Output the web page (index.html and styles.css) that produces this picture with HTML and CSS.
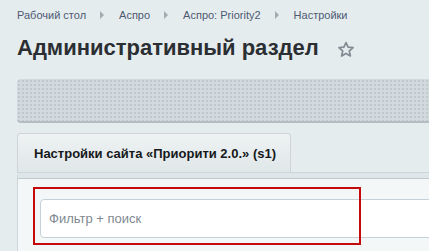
FILE: index.html
```html
<!DOCTYPE html>
<html lang="ru">
<head>
    <meta charset="UTF-8">
    <title>Административный раздел</title>
    <link rel="stylesheet" href="styles.css">
</head>
<body>
    <div class="page">
        <div class="breadcrumbs">
            <a href="#">Рабочий стол</a>
            <span class="sep"></span>
            <a href="#">Аспро</a>
            <span class="sep"></span>
            <a href="#">Аспро: Priority2</a>
            <span class="sep"></span>
            <a href="#">Настройки</a>
        </div>

        <div class="title-row">
            <h1>Административный раздел</h1>
            <svg class="star" width="18" height="17" viewBox="0 0 18 17">
                <path d="M9 1.6 L11.1 6.2 L16.1 6.7 L12.3 10 L13.4 15 L9 12.4 L4.6 15 L5.7 10 L1.9 6.7 L6.9 6.2 Z" fill="none" stroke="#838c93" stroke-width="1.7" stroke-linejoin="round"/>
            </svg>
        </div>

        <div class="toolbar"></div>

        <div class="tabs">
            <div class="tab">Настройки сайта «Приорити 2.0.» (s1)</div>
        </div>

        <div class="content">
            <div class="filter">
                <input class="filter-input" type="text" placeholder="Фильтр + поиск">
                <div class="highlight"></div>
            </div>
        </div>
    </div>
</body>
</html>
```

FILE: styles.css
```css
* {
    margin: 0;
    padding: 0;
    box-sizing: border-box;
    font-family: "Liberation Sans", Arial, sans-serif;
}

body {
    background-color: #e5ecee;
    overflow: hidden;
}

.page {
    padding: 8px 0 0 17px;
}

.breadcrumbs {
    display: flex;
    align-items: center;
    font-size: 11px;
    line-height: 14px;
    height: 14px;
}

.breadcrumbs a {
    color: #4d5a72;
    text-decoration: none;
}

.sep {
    width: 0;
    height: 0;
    border-top: 4px solid transparent;
    border-bottom: 4px solid transparent;
    border-left: 4px solid #a3abb0;
    margin: 0 15px 0 14px;
}

.title-row {
    display: flex;
    align-items: center;
    margin-top: 13px;
    height: 26px;
}

h1 {
    font-size: 22px;
    line-height: 26px;
    font-weight: bold;
    color: #2b2f33;
}

.star {
    margin-left: 18px;
    margin-top: 2px;
}

.toolbar {
    margin-top: 18px;
    height: 44px;
    border-radius: 4px 0 0 4px;
    background-color: #d3dadd;
    background-image: radial-gradient(circle, #bfc8cc 0.8px, transparent 1px);
    background-size: 4px 4px;
    border-bottom: 2px solid #b4bdc2;
}

.tabs {
    display: flex;
    margin-top: 10px;
    height: 40px;
    border-bottom: 1px solid #cdd5d9;
}

.tab {
    width: 274px;
    padding: 0 0 0 16px;
    display: flex;
    align-items: center;
    white-space: nowrap;
    font-size: 13px;
    font-weight: bold;
    color: #15181b;
    background: linear-gradient(#eef2f3, #e0e7e9);
    border: 1px solid #cdd5d9;
    border-bottom: none;
    border-radius: 4px 4px 0 0;
}

.content {
    background-color: #f4f7f8;
    border-top: 5px solid #dfe6e9;
    border-left: 1px solid #cdd5d9;
    height: 80px;
    box-shadow: inset 0 1px 0 #bfc8cd;
    padding: 9px 0 0 15px;
}

.filter {
    position: relative;
    padding: 12px 0 0 7px;
}

.filter-input {
    display: block;
    width: calc(100% + 20px);
    height: 39px;
    border: 1px solid #c5d2d8;
    border-radius: 4px 0 0 4px;
    background: #fff;
    padding: 0 8px;
    font-size: 13px;
    color: #333;
    outline: none;
}

.filter-input::placeholder {
    color: #80898f;
}

.highlight {
    position: absolute;
    left: 0;
    top: 0;
    width: 328px;
    height: 58px;
    border: 2px solid #c40a0a;
}
```
